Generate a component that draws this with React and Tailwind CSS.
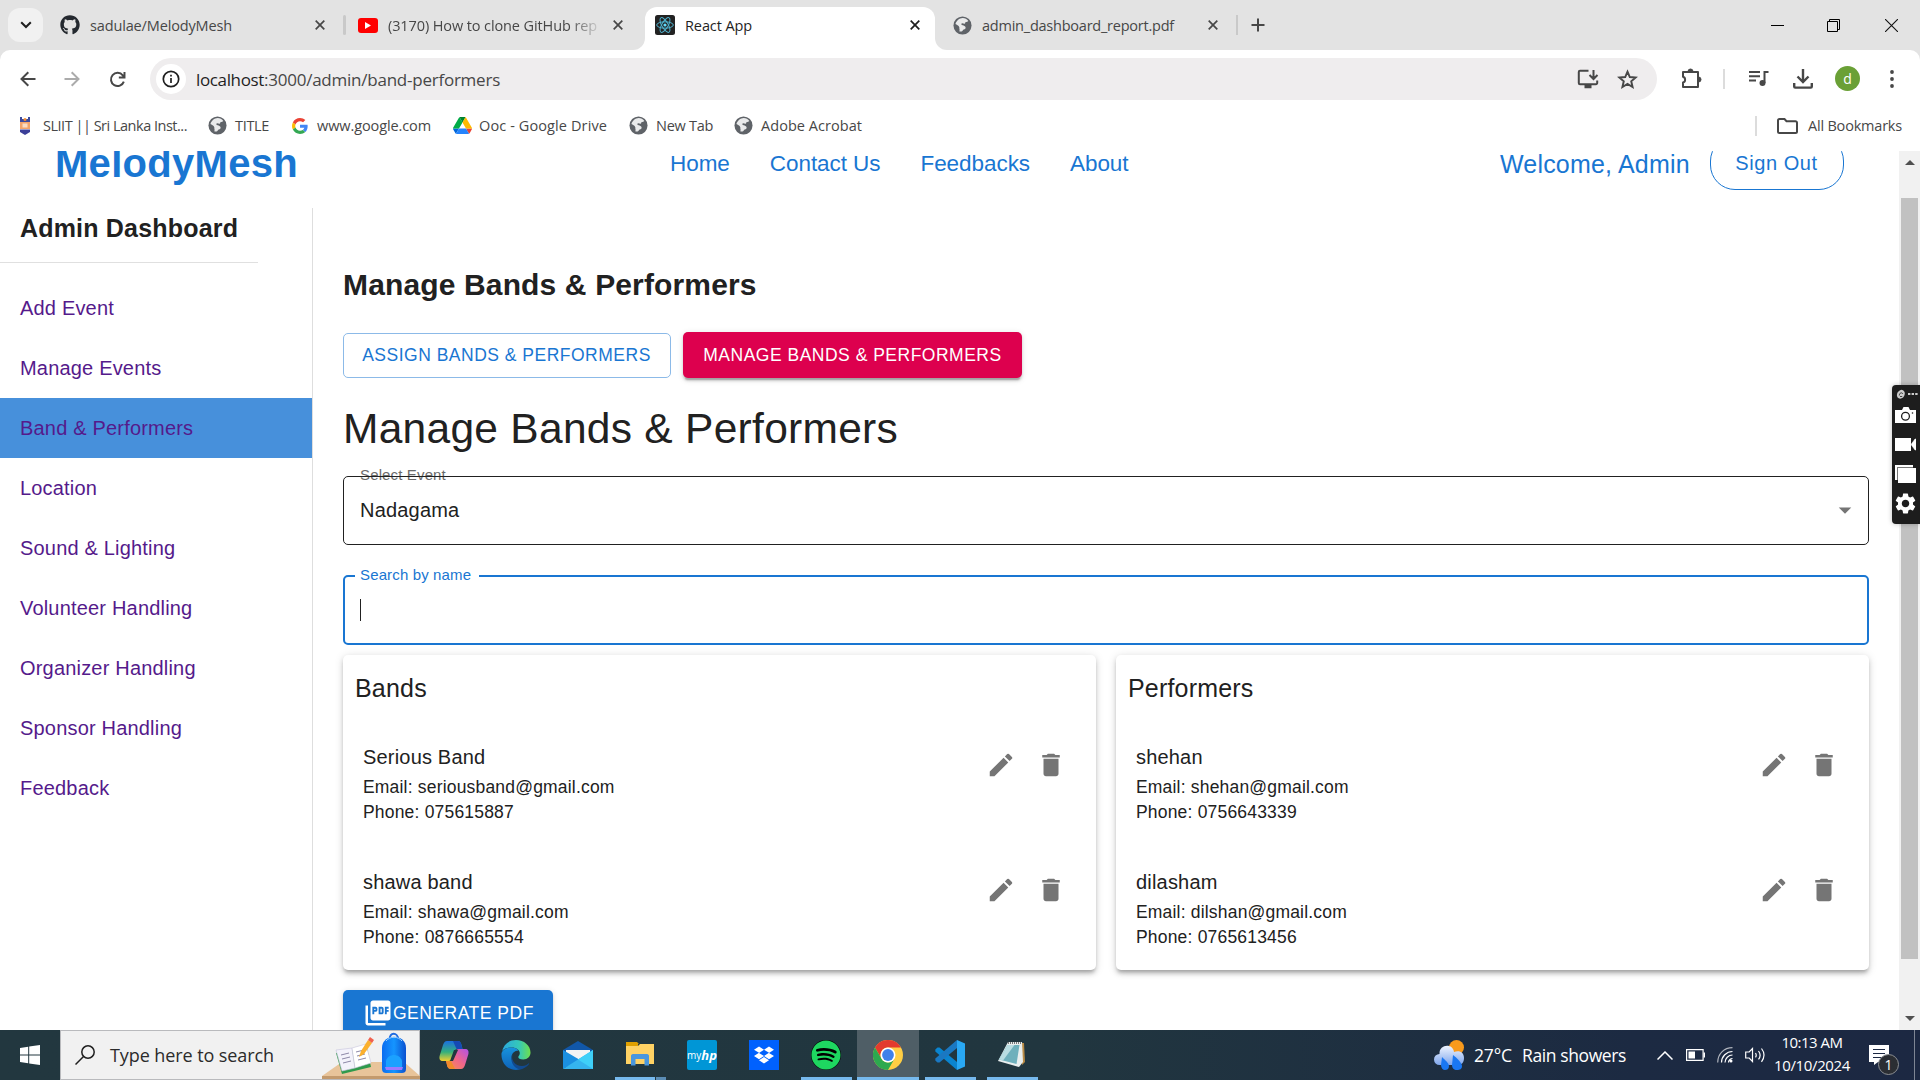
import React, { useLayoutEffect, useRef } from "react";
import { MdEdit, MdDelete, MdPictureAsPdf, MdArrowDropDown, MdSettings } from "react-icons/md";
import { FaGithub, FaSpotify, FaDropbox } from "react-icons/fa";

/* A label that spreads its letters over a set advance width. */
function Fit({ w, className = "", children }) {
  const ref = useRef(null);
  useLayoutEffect(() => {
    const el = ref.current;
    el.style.letterSpacing = "0px";
    const natural = el.getBoundingClientRect().width;
    el.style.letterSpacing = (w - natural) / children.length + "px";
  }, [w, children]);
  return (
    <span ref={ref} className={"inline-block shrink-0 whitespace-pre " + className}>
      {children}
    </span>
  );
}

const Globe = ({ className = "" }) => (
  <svg viewBox="0 0 20 20" className={"size-[19px] shrink-0 " + className}>
    <circle cx="10" cy="10" r="9.5" fill="#5f6368" />
    <path d="M8.2 2.2c2.2-.6 4.9 0 6.6 1.6-.6 1.4-1.6 1.2-2.4 1.8-.7.6.2 1.700-.7 2-1.200.4-2.600-.3-3.200.8-.3.9.6 1.300 1.600 1.300 1.300 0 2.900.2 3.600 1.500.4 1.200-.5 2.100-1.400 2.500-.8.4-.5 1.600-1.300 2.300-.7.700-1.700.9-2.800.8.2-1.300-.2-2.200-.7-3 0-1.200-.8-1.900-1.700-2.400-1-.6-2.500-.9-3.400-1.200.1-3.800 2.500-7 5.800-8z" fill="#e9eaeb" transform="rotate(14 10 10)" />
  </svg>
);

const Close = ({ color = "#474747", className = "" }) => (
  <svg viewBox="0 0 10 10" className={"size-[10px] shrink-0 " + className} fill="none" stroke={color} strokeWidth="1.7">
    <path d="M.7.7l8.600 8.600M9.300.7L.7 9.300" />
  </svg>
);

const ReactMark = () => (
  <svg viewBox="0 0 20 20" className="size-5 shrink-0">
    <rect width="20" height="20" rx="2.500" fill="#222" />
    <g fill="none" stroke="#4fb3cf" strokeWidth="1">
      <ellipse cx="10" cy="10" rx="8.300" ry="3.200" />
      <ellipse cx="10" cy="10" rx="8.300" ry="3.200" transform="rotate(60 10 10)" />
      <ellipse cx="10" cy="10" rx="8.300" ry="3.200" transform="rotate(120 10 10)" />
    </g>
    <circle cx="10" cy="10" r="1.600" fill="#61dafb" />
  </svg>
);

const GoogleG = () => (
  <svg viewBox="0 0 48 48" className="size-[16px] shrink-0">
    <path fill="#EA4335" d="M24 9.500c3.540 0 6.710 1.220 9.210 3.600l6.850-6.850C35.900 2.380 30.470 0 24 0 14.620 0 6.510 5.380 2.560 13.220l7.980 6.190C12.430 13.720 17.740 9.500 24 9.500z" />
    <path fill="#4285F4" d="M46.980 24.550c0-1.570-.15-3.090-.38-4.550H24v9.020h12.940c-.58 2.960-2.260 5.480-4.780 7.180l7.730 6c4.510-4.180 7.090-10.360 7.090-17.650z" />
    <path fill="#FBBC05" d="M10.530 28.590c-.48-1.450-.76-2.990-.76-4.590s.27-3.140.76-4.590l-7.980-6.190C.92 16.460 0 20.120 0 24c0 3.880.92 7.540 2.560 10.780l7.970-6.190z" />
    <path fill="#34A853" d="M24 48c6.480 0 11.930-2.130 15.890-5.810l-7.730-6c-2.150 1.450-4.920 2.300-8.160 2.300-6.260 0-11.570-4.220-13.470-9.910l-7.980 6.190C6.510 42.620 14.620 48 24 48z" />
  </svg>
);

const Drive = () => (
  <svg viewBox="0 0 87.300 78" className="h-[17px] w-[19px] shrink-0">
    <path d="m6.600 66.850 3.850 6.650c.8 1.400 1.950 2.500 3.300 3.300l13.750-23.800h-27.500c0 1.550.4 3.100 1.200 4.500z" fill="#0066da" />
    <path d="m43.650 25-13.750-23.800c-1.350.8-2.500 1.900-3.300 3.300l-25.400 44a9.060 9.060 0 0 0 -1.200 4.500h27.500z" fill="#00ac47" />
    <path d="m73.550 76.800c1.350-.8 2.500-1.900 3.300-3.300l1.600-2.750 7.650-13.250c.8-1.400 1.200-2.950 1.200-4.500h-27.502l5.852 11.500z" fill="#ea4335" />
    <path d="m43.650 25 13.750-23.800c-1.350-.8-2.900-1.200-4.500-1.200h-18.500c-1.600 0-3.150.45-4.500 1.200z" fill="#00832d" />
    <path d="m59.800 53h-32.300l-13.750 23.800c1.350.8 2.900 1.200 4.500 1.200h50.800c1.600 0 3.150-.45 4.500-1.200z" fill="#2684fc" />
    <path d="m73.400 26.500-12.700-22c-.8-1.400-1.950-2.500-3.300-3.300l-13.750 23.800 16.150 28h27.450c0-1.550-.4-3.100-1.200-4.500z" fill="#ffba00" />
  </svg>
);

const Crest = () => (
  <svg viewBox="0 0 12 18" className="h-[18px] w-3 shrink-0">
    <path d="M1 0h2v2h6V0h2v5H1z" fill="#3b4a9e" />
    <circle cx="6" cy="2.500" r="1.500" fill="#f28b30" />
    <path d="M1 5h10v7H1z" fill="#f2a46b" />
    <path d="M3.500 6.500h5v4h-5z" fill="#f9dcc4" />
    <path d="M1 12.500h10V15l-5 3-5-3z" fill="#3b3f98" />
  </svg>
);

function TabStrip() {
  return (
    <div className="flex h-[50px] w-full items-center bg-[#e3e3e3] text-[14.500px] text-[#474747]">
      <div className="ml-2 flex h-[34px] w-[35px] items-center justify-center rounded-xl bg-[#f1f1f1]">
        <svg viewBox="0 0 12 8" className="h-2 w-3" fill="none" stroke="#1f1f1f" strokeWidth="2"><path d="M1.200 1.200L6 6l4.800-4.800" /></svg>
      </div>
      <FaGithub className="ml-[17px] size-5 shrink-0 text-[#24292f]" />
      <Fit w={142} className="ml-[10px] pt-[2px]">sadulae/MelodyMesh</Fit>
      <Close className="ml-[83px]" />
      <div className="ml-[18px] h-5 w-[3px] shrink-0 rounded bg-[#c9c9c9]" />
      <div className="ml-3 flex h-[15px] w-5 shrink-0 items-center justify-center rounded-[3px] bg-[#ff0000]">
        <svg viewBox="0 0 6 7" className="h-[7px] w-[6px]"><path d="M0 0l6 3.500L0 7z" fill="#fff" /></svg>
      </div>
      <div className="ml-[10px] w-[210px] shrink-0 pt-[2px] [mask-image:linear-gradient(to_right,#000_86%,rgba(0,0,0,0.15))]">
        <Fit w={209}>(3170) How to clone GitHub rep</Fit>
      </div>
      <Close className="ml-[15px]" />
      <div className="ml-[10px] h-[50px] w-3 shrink-0 bg-white">
        <div className="h-full w-full rounded-br-xl bg-[#e3e3e3]" />
      </div>
      <div className="flex h-[43px] w-[290px] shrink-0 items-center self-end rounded-t-xl bg-white pb-[7px] text-[#1f1f1f]">
        <div className="ml-[10px] flex"><ReactMark /></div>
        <Fit w={67} className="ml-[10px] pt-[2px]">React App</Fit>
        <Close color="#1f1f1f" className="ml-[158px]" />
      </div>
      <div className="h-[50px] w-3 shrink-0 bg-white">
        <div className="h-full w-full rounded-bl-xl bg-[#e3e3e3]" />
      </div>
      <Globe className="ml-[6px]" />
      <Fit w={192} className="ml-[10px] pt-[2px]">admin_dashboard_report.pdf</Fit>
      <Close className="ml-[34px]" />
      <div className="ml-[18px] h-5 w-[2px] shrink-0 bg-[#c9c9c9]" />
      <svg viewBox="0 0 14 14" className="ml-[13px] size-[14px] shrink-0" stroke="#474747" strokeWidth="2"><path d="M7 .5v13M.5 7h13" /></svg>
      <div className="ml-auto mr-[22px] flex items-center text-black">
        <div className="h-px w-[13px] bg-black" />
        <svg viewBox="0 0 13 13" className="ml-[43px] size-[13px]" fill="none" stroke="#000"><path d="M.5 2.500h10v10H.5zM2.500 2V.5h10v10h-2" /></svg>
        <svg viewBox="0 0 13 13" className="ml-[45px] size-[13px]" fill="none" stroke="#111" strokeWidth="1.100"><path d="M0 0l13 13M13 0L0 13" /></svg>
      </div>
    </div>
  );
}

function Toolbar() {
  return (
    <div className="h-[50px] w-full bg-[#e3e3e3]">
      <div className="flex h-[50px] items-end rounded-t-[10px] bg-white">
        <div className="flex h-[42px] w-full items-center">
          <svg viewBox="0 0 16 16" className="ml-5 size-4 shrink-0" fill="none" stroke="#474747" strokeWidth="2"><path d="M15.500 8H1.500M8.300 1.200L1.500 8l6.800 6.800" /></svg>
          <svg viewBox="0 0 16 16" className="ml-[28px] size-4 shrink-0" fill="none" stroke="#ababab" strokeWidth="2"><path d="M.5 8h14M7.700 1.200L14.500 8l-6.800 6.800" /></svg>
          <svg viewBox="0 0 18 18" className="ml-[29px] size-[17px] shrink-0" fill="none" stroke="#474747" strokeWidth="2.100"><path d="M15.700 11.200A7 7 0 1 1 14.600 4.600L16 6.300M16.400 1v6h-6" /></svg>
          <div className="ml-[24px] flex h-[42px] w-[1507px] shrink-0 items-center rounded-full bg-[#efedee]">
            <div className="ml-[6px] flex size-[30px] items-center justify-center rounded-full bg-white">
              <svg viewBox="0 0 18 18" className="size-[18px]" fill="none" stroke="#1f1f1f" strokeWidth="1.700"><circle cx="9" cy="9" r="7.700" /><path d="M9 8v5M9 4.800v1.700" /></svg>
            </div>
            <Fit w={68} className="ml-[10px] pt-px text-[17px] text-[#1f1f1f]">localhost</Fit>
            <Fit w={236} className="pt-px text-[17px] text-[#474747]">:3000/admin/band-performers</Fit>
            <svg viewBox="0 0 22 20" className="ml-auto h-5 w-[22px]" fill="none" stroke="#474747" strokeWidth="2"><path d="M11.500 1.800H3A1.200 1.200 0 0 0 1.800 3v11A1.200 1.200 0 0 0 3 15.200h16a1.200 1.200 0 0 0 1.200-1.200v-2.500M16.500 1v8.500M12.500 6l4 4 4-4" /><path d="M7.500 17.500h7" strokeWidth="3.500" /></svg>
            <svg viewBox="0 0 24 24" className="ml-[17px] mr-[18px] size-[23px]" fill="none" stroke="#474747" strokeWidth="2"><path d="M12 3.800l2.400 5.600 6.100.5-4.600 4 1.400 5.900-5.300-3.200-5.300 3.200 1.400-5.900-4.600-4 6.100-.5z" /></svg>
          </div>
          <svg viewBox="0 0 22 22" className="ml-[23px] mb-[2px] size-[22px] shrink-0" fill="none" stroke="#474747" strokeWidth="2"><path d="M3 5h15v15H3v-4.500c2.800-.6 2.800-5 0-5.700z" strokeLinejoin="round" /><path d="M8 4.500a2.500 2.500 0 0 1 5 0zM18.500 10a2.500 2.500 0 0 1 0 5z" fill="#474747" strokeWidth="1" /></svg>
          <div className="ml-[21px] h-5 w-[2px] shrink-0 bg-[#dcdcdc]" />
          <svg viewBox="0 0 20 18" className="ml-[24px] mb-[3px] h-[18px] w-5 shrink-0" fill="none" stroke="#474747" strokeWidth="2"><path d="M0 3h11M0 7.300h11M0 11.500h7M15.500 14V3h4" /><circle cx="13.500" cy="14" r="3" fill="#474747" stroke="none" /></svg>
          <svg viewBox="0 0 20 20" className="ml-[24px] size-5 shrink-0" fill="none" stroke="#474747" strokeWidth="2.400"><path d="M10 0v12M4.500 7.500L10 13l5.500-5.500M1.200 14v3.600c0 .6.500 1 1 1h15.600c.6 0 1-.4 1-1V14" /></svg>
          <div className="ml-[22px] mb-px flex size-[25px] shrink-0 items-center justify-center rounded-full bg-[#6aa036] text-[14px] leading-none text-white">d</div>
          <svg viewBox="0 0 4 18" className="ml-[30px] h-[18px] w-1 shrink-0" fill="#474747"><circle cx="2" cy="2" r="1.900" /><circle cx="2" cy="9" r="1.900" /><circle cx="2" cy="16" r="1.900" /></svg>
        </div>
      </div>
    </div>
  );
}

function Bookmarks() {
  return (
    <div className="flex h-[51px] items-center bg-white text-[14.500px] text-[#474747]">
      <div className="ml-[19px] flex"><Crest /></div>
      <Fit w={144} className="ml-3">SLIIT || Sri Lanka Inst...</Fit>
      <Globe className="ml-[21px]" />
      <Fit w={34} className="ml-2">TITLE</Fit>
      <div className="ml-[23px] flex"><GoogleG /></div>
      <Fit w={114} className="ml-[9px]">www.google.com</Fit>
      <div className="ml-[22px] flex"><Drive /></div>
      <Fit w={128} className="ml-[7px]">Ooc - Google Drive</Fit>
      <Globe className="ml-[22px]" />
      <Fit w={57} className="ml-[8px]">New Tab</Fit>
      <Globe className="ml-[21px]" />
      <Fit w={101} className="ml-[8px]">Adobe Acrobat</Fit>
      <div className="ml-auto h-5 w-[2px] bg-[#dcdcdc]" />
      <svg viewBox="0 0 21 16" className="ml-5 h-4 w-[21px]" fill="none" stroke="#474747" strokeWidth="2"><path d="M2.500 1h5l2 2.200h9A1.500 1.500 0 0 1 20 4.700v8.800a1.500 1.500 0 0 1-1.500 1.500h-16A1.500 1.500 0 0 1 1 13.500v-11A1.500 1.500 0 0 1 2.500 1z" /></svg>
      <Fit w={94} className="ml-[10px] mr-[18px]">All Bookmarks</Fit>
    </div>
  );
}

function SiteHeader() {
  return (
    <header className="flex h-[57px] shrink-0 text-[#1976d2]">
      <div className="ml-[55px] mt-[-11px] w-[615px] text-[40px] font-bold leading-[46px] tracking-[0.300px]">MelodyMesh</div>
      <nav className="mt-[-3px] flex w-[830px] gap-[40px] text-[22.500px] leading-8 tracking-[-0.060px]">
        <a>Home</a><a>Contact Us</a><a>Feedbacks</a><a>About</a>
      </nav>
      <div className="mt-[-3px] w-[210px] whitespace-nowrap text-[25px] leading-8 tracking-[0.188px]">Welcome, Admin</div>
      <button className="mt-[-15px] flex h-[54px] w-[134px] items-center justify-center rounded-[25px] border border-[#1976d2] pr-px text-[20px] tracking-[0.571px]">Sign Out</button>
    </header>
  );
}

const LINKS = ["Add Event", "Manage Events", "Band & Performers", "Location", "Sound & Lighting", "Volunteer Handling", "Organizer Handling", "Sponsor Handling", "Feedback"];

function Sidebar() {
  return (
    <aside className="w-[313px] shrink-0 border-r border-[#dedede]">
      <h6 className="h-[54px] whitespace-nowrap pl-5 text-[25px] font-bold leading-[40px] tracking-[0.188px] text-[#212121]">Admin Dashboard</h6>
      <div className="h-px w-[258px] bg-[#e0e0e0]" />
      <ul className="mt-[15px]">
        {LINKS.map((l) => (
          <li key={l} className={"flex h-[60px] items-center pl-5 text-[20px] tracking-[0.188px] text-[#551a8b] " + (l === "Band & Performers" ? "bg-[#4790db]" : "")}>{l}</li>
        ))}
      </ul>
    </aside>
  );
}

function ListCard({ title, items }) {
  return (
    <section className="h-[315px] w-[753px] rounded-[5px] bg-white pl-[12px] text-[#212121] shadow-[0_3.750px_3.750px_-2.500px_rgba(0,0,0,0.2),0_3.750px_5px_rgba(0,0,0,0.14),0_1.250px_10px_rgba(0,0,0,0.12)]">
      <h6 className="h-[80px] pt-[13px] text-[25px] leading-[40px] tracking-[0.188px]">{title}</h6>
      {items.map(([name, email, phone]) => (
        <div key={name} className="flex h-[125px] pl-[8px]">
          <div className="flex-1 pt-[7px]">
            <div className="mb-[3px] text-[20px] leading-[30px] tracking-[0.188px]">{name}</div>
            <div className="text-[17.500px] leading-[25px] tracking-[0.187px]">Email: {email}</div>
            <div className="text-[17.500px] leading-[25px] tracking-[0.187px]">Phone: {phone}</div>
          </div>
          <div className="mr-[30px] mt-[15px] flex gap-5 text-[#757575]">
            <MdEdit className="size-[30px]" />
            <MdDelete className="size-[30px]" />
          </div>
        </div>
      ))}
    </section>
  );
}

const BANDS = [["Serious Band", "seriousband@gmail.com", "075615887"], ["shawa band", "shawa@gmail.com", "0876665554"]];
const PERFORMERS = [["shehan", "shehan@gmail.com", "0756643339"], ["dilasham", "dilshan@gmail.com", "0765613456"]];
const RAISED = "shadow-[0_3.750px_1.250px_-2.500px_rgba(0,0,0,0.2),0_2.500px_2.500px_rgba(0,0,0,0.14),0_1.250px_6.250px_rgba(0,0,0,0.12)]";

function Main() {
  return (
    <main className="ml-[30px] w-[1526px] text-[#212121]">
      <h5 className="mt-[57px] text-[30px] font-bold leading-[40px] tracking-[0.140px]">Manage Bands &amp; Performers</h5>
      <div className="mt-[27px] flex h-[46px] items-end text-[17.500px] tracking-[0.500px]">
        <button className="flex h-[45px] w-[328px] items-center justify-center whitespace-nowrap rounded-[5px] border border-[#8cbae8] pr-px text-[#1976d2]">ASSIGN BANDS &amp; PERFORMERS</button>
        <button className={"ml-3 flex h-[46px] w-[339px] items-center justify-center whitespace-nowrap rounded-[5px] bg-[#dd004e] text-white " + RAISED}>MANAGE BANDS &amp; PERFORMERS</button>
      </div>
      <h4 className="mt-[26px] text-[42.500px] leading-[50px] tracking-[0.280px]">Manage Bands &amp; Performers</h4>
      <div className="relative mt-[22px] flex h-[69px] items-center justify-between rounded-[5px] border border-[#212121] pb-px pl-[16px] pr-[8px] text-[20px] tracking-[0.188px]">
        <span>Nadagama</span>
        <MdArrowDropDown className="size-[30px] text-[#757575]" />
        <span className="absolute left-[16px] top-[-12px] text-[15px] leading-5 tracking-[0.141px] text-[#6b6b6b]">Select Event</span>
        <span className="absolute left-[14px] top-[-1px] h-px w-[95px] bg-[#212121]" />
      </div>
      <div className="relative mt-[30px] flex h-[70px] items-center rounded-[5px] border-2 border-[#1976d2] pl-[15px]">
        <div className="mt-[-1px] h-[22px] w-px bg-[#212121]" />
        <span className="absolute left-[10px] top-[-12px] w-[124px] whitespace-nowrap bg-white pl-[5px] text-[15px] leading-5 tracking-[0.141px] text-[#1976d2]">Search by name</span>
      </div>
      <div className="mt-[10px] flex gap-5">
        <ListCard title="Bands" items={BANDS} />
        <ListCard title="Performers" items={PERFORMERS} />
      </div>
      <button className={"mt-5 flex h-[46px] w-[210px] items-center whitespace-nowrap rounded-[5px] bg-[#1976d2] pl-5 text-[17.500px] tracking-[0.500px] text-white " + RAISED}>
        <MdPictureAsPdf className="size-[30px] shrink-0" />GENERATE PDF
      </button>
    </main>
  );
}

function Scrollbar() {
  return (
    <div className="flex w-[21px] shrink-0 flex-col items-center bg-[#f1f1f1]">
      <svg viewBox="0 0 10 5" className="mt-[9px] h-[5px] w-[10px] shrink-0"><path d="M5 0l5 5H0z" fill="#505050" /></svg>
      <div className="mt-[33px] h-[761px] w-[17px] shrink-0 bg-[#c1c1c1]" />
      <svg viewBox="0 0 10 5" className="mt-[57px] h-[5px] w-[10px] shrink-0"><path d="M0 0h10L5 5z" fill="#505050" /></svg>
    </div>
  );
}

function CaptureWidget() {
  return (
    <div className="absolute right-0 top-[385px] flex h-[139px] w-[28px] flex-col items-center rounded-l-[4px] bg-[#1d1d1d] pr-px text-white shadow-[0_0_5px_rgba(0,0,0,0.250)]">
      <div className="mt-[4px] flex h-[10px] w-full shrink-0 items-center">
        <svg viewBox="0 0 10 10" className="ml-[4px] size-[10px]"><ellipse cx="5" cy="5.300" rx="3.700" ry="4.600" fill="#ccc" transform="rotate(28 5 5)" /><path d="M3.300 6.500c0-3 3-3.500 3.500-1.500M4 7.500h2.200" stroke="#333" fill="none" strokeWidth=".9" /></svg>
        <svg viewBox="0 0 10 2" className="ml-[2px] h-[2px] w-[10px]" fill="#ccc"><path d="M0 0h2.400v2H0zM3.600 0H6v2H3.600zM7.200 0h2.400v2H7.200z" /></svg>
      </div>
      <svg viewBox="0 0 21 16" className="mt-[8px] h-4 w-[21px] shrink-0"><path d="M0 3h7l1.500-3h5L15 3h6v13H0z" fill="#fff" /><circle cx="10.500" cy="9.300" r="3.900" fill="none" stroke="#1d1d1d" strokeWidth="1.300" /><circle cx="17.500" cy="6" r=".8" fill="#1d1d1d" /></svg>
      <svg viewBox="0 0 21 13" className="mt-[15px] h-[13px] w-[21px] shrink-0" fill="#fff"><path d="M0 0h16v13H0z" /><path d="M16 6.500L20 1h1v11h-1z" stroke="#fff" strokeWidth=".5" /></svg>
      <svg viewBox="0 0 21 18" className="mt-[14px] h-[18px] w-[21px] shrink-0"><path d="M0 0h18v2H2.500v13H0z" fill="#fff" /><path d="M3 3h18v15H3z" fill="#fff" /><path d="M2.500 15V2.500H18" fill="none" stroke="#777" /></svg>
      <MdSettings className="mt-[8px] size-[25px] shrink-0" />
    </div>
  );
}

const Slot = ({ children, line, active }) => (
  <div className={"flex h-full w-[62px] flex-col items-center " + (active ? "bg-[#4f5e66]" : "")}>
    <div className="flex h-[47px] items-center pt-[3px]">{children}</div>
    <div className={"h-[3px] " + (line ? (active ? "w-full bg-[#76b9ed]" : "w-[51px] bg-[#76b9ed]") : "")} />
  </div>
);

const DeskScene = () => (
  <svg viewBox="0 0 98 48" className="h-12 w-[98px] shrink-0">
    <defs>
      <linearGradient id="bag" x1="0" x2="1"><stop offset="0" stopColor="#0a6cf0" /><stop offset=".5" stopColor="#1595ff" /><stop offset="1" stopColor="#0a50d0" /></linearGradient>
    </defs>
    <path d="M20 31h62l16 14H0z" fill="#e8c49a" /><path d="M0 45h98v3H0z" fill="#c39a6d" />
    <path d="M14 22l31-6 4 20-29 7z" fill="#2f9a4c" />
    <path d="M14 19l16-2 3 20-13 3z" fill="#f3f2fb" stroke="#c8c4dc" strokeWidth=".6" /><path d="M30 17l14-4 5 19-16 5z" fill="#fff" stroke="#c8c4dc" strokeWidth=".6" />
    <path d="M19 24l8-2M20 28l8-2M21 32l8-2M34 21l8-2M35 25l8-2M36 29l8-2" stroke="#8d88a8" strokeWidth="1" />
    <path d="M37 26l2-6L46 9l4 3-8 11z" fill="#fbb02d" /><path d="M46 9l2-3 4 3-2 3z" fill="#f0604d" />
    <path d="M68 8c-1-7 8-7 8 0" fill="none" stroke="#1f6be0" strokeWidth="2" />
    <path d="M60 17c0-15 24-15 24 0v21c0 3-2 4-4 4H64c-2 0-4-1-4-4z" fill="url(#bag)" />
    <path d="M64 30c2-8 14-8 16 0v7H64z" fill="#1ba1ff" /><path d="M63 36h18l-1 3H64z" fill="#9a7bff" /><path d="M64 10c4-5 12-5 16 0" fill="none" stroke="#9fd0ff" />
  </svg>
);

const Copilot = () => (
  <svg viewBox="0 0 30 28" className="h-7 w-[30px]">
    <defs>
      <linearGradient id="cpa" x1="0" y1="0" x2="0" y2="1"><stop offset="0" stopColor="#1b6fe0" /><stop offset=".55" stopColor="#35b07c" /><stop offset="1" stopColor="#f4cf2e" /></linearGradient>
      <linearGradient id="cpb" x1="1" y1="0" x2="0" y2="1"><stop offset="0" stopColor="#b052e8" /><stop offset=".5" stopColor="#f0668a" /><stop offset="1" stopColor="#fb9248" /></linearGradient>
    </defs>
    <path d="M8 0h11c2 0 3 2 3.500 4l1 4h-5c-2 0-3 1-3.500 3l-2 6c-.6 2-1.500 3-3.500 3H4C1 20 0 18 .6 15L4 4C5 1.500 6 0 8 0z" fill="url(#cpa)" />
    <path d="M22 28H12c-2.500 0-3.500-1.500-4-4l-1-4h4c2 0 3-1 3.500-3l2-6c.6-2 1.500-3 3.500-3h6c3 0 4 2 3.400 5L26 24c-1 2.500-2 4-4 4z" fill="url(#cpb)" />
    <path d="M19 0c2 0 3 2 3.500 4l1 4h-6L14 0z" fill="#1549b5" /><path d="M12 28c-2.500 0-3.500-1.500-4-4l-1-4h5l4 8z" fill="#f28a2b" />
    <path d="M15 9h4l-5 11h-3z" fill="#22373f" />
  </svg>
);

const Edge = () => (
  <svg viewBox="0 0 30 30" className="size-[30px]">
    <defs>
      <linearGradient id="ega" x1="0" x2="1"><stop offset="0" stopColor="#2aa7e0" /><stop offset=".6" stopColor="#35c8b8" /><stop offset="1" stopColor="#6fe04c" /></linearGradient>
      <linearGradient id="egb" x1="0" y1="0" x2="0" y2="1"><stop offset="0" stopColor="#1793dd" /><stop offset="1" stopColor="#0f62b8" /></linearGradient>
    </defs>
    <path d="M.8 12C2.500 4.500 8 0 15 0c8 0 14.500 5.500 14.500 12.500 0 4-3 7-7.200 7-3.500 0-5-1.200-5-2.500s1.500-1.500 1.500-4c0-3-3.500-5.500-8-5.500C5 7.500 1.500 10 .8 12z" fill="url(#ega)" />
    <path d="M.5 13.500C1.500 10 5 7.500 10.500 7.500c3 0 5.500 1 7 3-4 0-7 3-7 7 0 6 5 10.500 11 10.500-2 1.200-4 2-6.500 2C6.500 30 0 23 .5 13.500z" fill="url(#egb)" />
    <path d="M12 13.500c-3 6 2 12.500 9 12.500 3 0 5.500-1.500 6.500-2.500.6-.5 1 0 .6.6C26 27 22.500 29 19.500 29.400 12 28.500 8 20 12 13.500z" fill="#124a8f" />
  </svg>
);

function Taskbar() {
  return (
    <footer className="flex h-[50px] w-full items-stretch overflow-hidden bg-[linear-gradient(to_right,#22373f_0%,#21363f_55%,#1c2a42_85%,#1c2842_100%)] text-white">
      <div className="flex w-[60px] shrink-0 items-center justify-center">
        <svg viewBox="0 0 20 20" className="size-5" fill="#fff"><path d="M0 3l8.200-1.200v7.700H0zM9.200 1.600L20 0v9.500H9.200zM0 10.500h8.200v7.700L0 17zM9.200 10.500H20V20L9.200 18.400z" /></svg>
      </div>
      <div className="flex w-[360px] shrink-0 items-center border border-[#b9babd] bg-[#f1f1f1] text-[#2b2b2b]">
        <svg viewBox="0 0 20 20" className="ml-[14px] size-5 shrink-0" fill="none" stroke="#1f1f1f" strokeWidth="1.500"><circle cx="13" cy="7" r="6.200" /><path d="M8.500 11.500L.5 19.500" /></svg>
        <Fit w={164} className="ml-[15px] text-[18px]">Type here to search</Fit>
        <div className="-mr-px ml-auto"><DeskScene /></div>
      </div>
      <div className="ml-[3px] flex">
        <Slot><Copilot /></Slot>
        <Slot><Edge /></Slot>
        <Slot>
          <svg viewBox="0 0 30 28" className="h-7 w-[30px]"><path d="M0 9L15 0l15 9v6H0z" fill="#1157a8" /><path d="M3 9h24v8l-12 4L3 17z" fill="#f4f4f4" /><path d="M0 9l17 10L0 28z" fill="#1b8fe0" /><path d="M30 9v19H0z" fill="#35b4ee" /><path d="M30 9L15 18.500 30 28z" fill="#3fd0f8" /></svg>
        </Slot>
        <div className="flex h-full w-[62px] flex-col items-center">
          <div className="flex h-[47px] items-center">
            <svg viewBox="0 0 28 24" className="h-6 w-7"><path d="M0 0h11l2 2h-1v5H0z" fill="#e0a000" /><path d="M0 4h12l2-2h14v20H0z" fill="#ffd264" /><path d="M5 23V14c0-1 .6-2 2-2h14c1.400 0 2 1 2 2v9.500h-4.500V17h-9v6.500H5z" fill="#4a97dd" /></svg>
          </div>
          <div className="flex h-[3px] w-[51px] gap-px"><div className="w-10 bg-[#76b9ed]" /><div className="w-[10px] bg-[#5b8db5]" /></div>
        </div>
        <Slot><div className="flex size-[30px] items-center justify-center rounded-[2px] bg-[#0096d6] text-[10px] leading-none">my<b className="text-[13px] italic">hp</b></div></Slot>
        <Slot><div className="flex size-[30px] items-center justify-center bg-[#0061fe]"><FaDropbox className="size-[20px]" /></div></Slot>
        <Slot line><div className="flex size-[30px] items-center justify-center rounded-full bg-black"><FaSpotify className="size-[30px] shrink-0 text-[#1ed760]" /></div></Slot>
        <Slot line active>
          <svg viewBox="0 0 30 30" className="size-[30px]"><circle cx="15" cy="15" r="15" fill="#ffce44" /><path d="M2 7.500A15 15 0 0 1 28 7.500H15a7.500 7.500 0 0 0-6.500 11.250z" fill="#e33b2e" /><path d="M2 7.500l6.500 11.250A7.500 7.500 0 0 0 21.500 18.750L15 30A15 15 0 0 1 2 7.500z" fill="#2da94f" /><circle cx="15" cy="15" r="7.500" fill="#fff" /><circle cx="15" cy="15" r="5.900" fill="#3f80ea" /></svg>
        </Slot>
        <Slot line>
          <svg viewBox="0 0 30 30" className="size-[30px]"><path d="M2.500 7.500L.3 9.500v2L22 30v-8L4.500 7.500z" fill="#0a84cf" /><path d="M2.500 22.500l-2.200-2v-2L22 0v8L4.500 22.500z" fill="#1a78c2" /><path d="M22 0l8 3.500v23L22 30z" fill="#29a8f4" /></svg>
        </Slot>
        <Slot line>
          <svg viewBox="0 0 28 28" className="size-7"><path d="M23 2h3l1 19-3 3z" fill="#b98b45" /><path d="M10 1h14l1 20-4 5L0 20z" fill="#e9eeee" /><path d="M9.500 4h12l-3 19L1 18.500z" fill="#6fb0bc" /><path d="M9.500 4h7L5 19.500l-4-1z" fill="#b9dde2" /><path d="M10 2h14" stroke="#777" strokeDasharray="1 1" strokeWidth="2" /></svg>
        </Slot>
      </div>
      <div className="ml-auto flex items-center">
        <svg viewBox="0 0 30 30" className="size-[30px]">
          <defs><linearGradient id="cl" x1="0" y1="0" x2="0" y2="1"><stop offset="0" stopColor="#f0f5ff" /><stop offset="1" stopColor="#7fa6ec" /></linearGradient></defs>
          <circle cx="22.500" cy="7.500" r="7.500" fill="#f99a1c" /><path d="M5.500 25a5.500 5.500 0 0 1 0-11C5 4 19 3 20 12c6-2 10 1 10 6s-3 7-6 7z" fill="url(#cl)" />
          <path d="M8 17c3 3 7 6 7 9s-2 4-4 4-4-2-4-5zM19 15c4 3 9 8 9 11s-2 4-5 4-5-2-5-5z" fill="#1a77f2" />
        </svg>
        <Fit w={38} className="ml-[10px] text-[17.500px]">27°C</Fit>
        <Fit w={104} className="ml-[10px] text-[17.500px]">Rain showers</Fit>
        <svg viewBox="0 0 16 9" className="ml-[31px] h-[9px] w-4" fill="none" stroke="#fff" strokeWidth="1.500"><path d="M.5 8.500L8 1l7.500 7.500" /></svg>
        <svg viewBox="0 0 19 12" className="ml-[13px] h-3 w-[19px]"><path d="M.6.6h16.500v10.800H.6z" fill="none" stroke="#fff" strokeWidth="1.200" /><path d="M2.500 2.500H9v7H2.500zM17.500 3.500H19v5h-1.500z" fill="#fff" /></svg>
        <svg viewBox="0 0 16 16" className="ml-[12px] size-4" fill="none" stroke="#fff" strokeWidth="1.200"><path d="M.7 15.500C.7 7 7 .7 15.500.7" opacity=".65" /><path d="M4.500 15.500c0-6 5-11 11-11M8 15.500c0-4 3.500-7.500 7.500-7.500M11.500 15.500c0-2 2-4 4-4" /><circle cx="14" cy="14" r="1.500" fill="#fff" stroke="none" /></svg>
        <svg viewBox="0 0 21 18" className="ml-[12px] h-[18px] w-[21px]" fill="none" stroke="#fff" strokeWidth="1.200"><path d="M.7 6h3.500L7.500 2.500v13L4.200 12H.7zM10.500 7c1 1.500 1 2.800 0 4.300M13.500 5c2 2.600 2 5.800 0 8.300M16.500 2.500c3.500 4.500 3.500 8.500 0 13.300" /></svg>
        <div className="ml-[6px] flex w-[80px] flex-col items-center pb-[2px] text-[15px] leading-[23px]">
          <Fit w={61}>10:13 AM</Fit>
          <Fit w={76}>10/10/2024</Fit>
        </div>
        <div className="relative ml-[17px] h-5 w-5">
          <svg viewBox="0 0 20 20" className="size-5"><path d="M0 0h20v17H9l-4 3v-3H0z" fill="#fff" /><path d="M4 4.500h12M4 8.500h12M4 12.500h9" stroke="#1c2842" strokeWidth="1.200" /></svg>
          <span className="absolute left-[9px] top-[9px] flex size-[21px] items-center justify-center rounded-full border border-[#8b8e92] bg-[#2b2e33] text-[14px] leading-none">1</span>
        </div>
        <div className="ml-[25px] mr-[5px] h-[50px] w-px bg-[#7e8593]" />
      </div>
    </footer>
  );
}

export default function App() {
  return (
    <div className="relative flex h-[1080px] w-[1920px] flex-col overflow-hidden bg-white font-['Open_Sans','Noto_Sans',sans-serif]">
      <TabStrip />
      <Toolbar />
      <Bookmarks />
      <div className="flex h-[879px] shrink-0 overflow-hidden font-['Liberation_Sans',Arial,sans-serif]">
        <div className="flex w-[1899px] shrink-0 flex-col overflow-hidden">
          <SiteHeader />
          <div className="flex flex-1">
            <Sidebar />
            <Main />
          </div>
        </div>
        <Scrollbar />
      </div>
      <Taskbar />
      <CaptureWidget />
    </div>
  );
}
